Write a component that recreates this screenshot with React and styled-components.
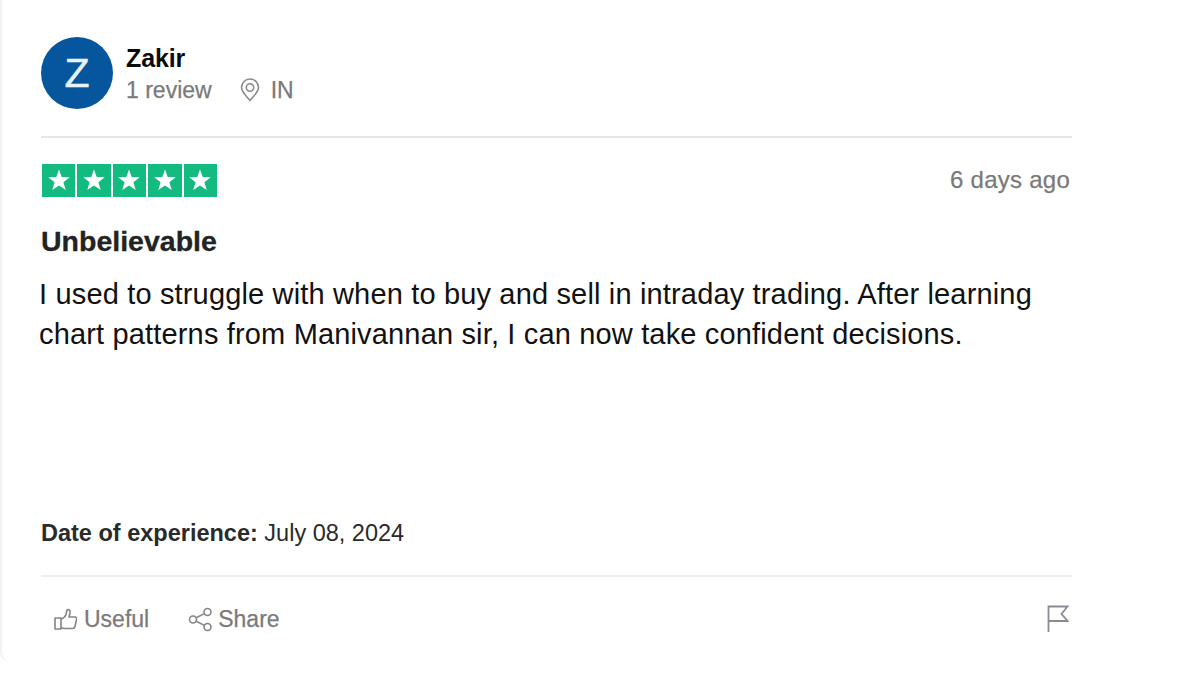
import React from "react";
import styled, { createGlobalStyle } from "styled-components";

const Global = createGlobalStyle`
  html, body { margin: 0; padding: 0; background: #fff; }
  body { font-family: "Liberation Sans", Arial, sans-serif; width: 1200px; height: 675px; overflow: hidden; }
`;
const Card = styled.div`
  width: 1072px; height: 662px; box-sizing: border-box;
  border-left: 2px solid #f2f2f2; border-bottom-left-radius: 10px;
  padding: 37px 0 0 39px;
  display: flex; flex-direction: column;
`;
const Header = styled.div`
  display: flex; gap: 13px; height: 72px; align-items: flex-start;
`;
const Avatar = styled.div`
  width: 72px; height: 72px; border-radius: 50%; background: #05569d; color: #e8f1f8;
  display: flex; align-items: center; justify-content: center;
  font-size: 41px; line-height: 1; -webkit-text-stroke: 0.5px #e8f1f8;
`;
const Who = styled.div`display: flex; flex-direction: column; padding-top: 7px;`;
const Name = styled.div`font-size: 25px; font-weight: 700; color: #0b0b0b; line-height: 28px; letter-spacing: -0.1px;`;
const Meta = styled.div`
  display: flex; align-items: center; font-size: 23px; line-height: 30px; color: #7a7a7a; margin-top: 3px;
  -webkit-text-stroke: 0.25px #7a7a7a;
`;
const Location = styled.span`display: flex; align-items: center; margin-left: 27px; gap: 10px;`;
const Rule = styled.div`height: 2px; background: ${p => p.$c};`;
const TopRule = styled(Rule)`margin-top: 27px;`;
const RatingRow = styled.div`
  display: flex; justify-content: space-between; align-items: center; margin-top: 25px; padding-left: 1px; height: 34px;
`;
const Stars = styled.div`display: flex; gap: 2px;`;
const Star = styled.div`
  width: 33.4px; height: 33px; background: #14bb80; display: flex; align-items: center; justify-content: center;
`;
const Ago = styled.div`
  font-size: 24px; color: #7a7a7a; line-height: 30px; margin: -1px 2px 0 0; letter-spacing: .25px;
  -webkit-text-stroke: 0.25px #7a7a7a;
`;
const Title = styled.div`
  font-size: 28.500px; font-weight: 700; color: #232323; line-height: 34px; margin-top: 27px;
  -webkit-text-stroke: 0.3px #232323;
`;
const Body = styled.div`font-size: 29px; line-height: 40px; color: #111; margin: 16px 0 0 -2px; letter-spacing: .16px;`;
const Experience = styled.div`font-size: 23.500px; line-height: 30px; color: #2a2a2a; margin-top: 164px; b { font-weight: 700; }`;
const BottomRule = styled(Rule)`margin-top: 27px;`;
const Actions = styled.div`
  display: flex; align-items: center; margin-top: 27px; padding-left: 13px; height: 30px;
`;
const Action = styled.div`
  display: flex; align-items: center; gap: ${p => p.$gap}px; font-size: 23px; color: #7a7a7c; margin-right: 39px;
  -webkit-text-stroke: 0.25px #7a7a7c;
`;
const FlagWrap = styled.div`margin: -2px 3px 0 auto; display: flex;`;

const StarIcon = () => (
  <svg width="24" height="24" viewBox="0 0 24 24">
    <path fill="#fff" d="M12 1.500l2.700 7.600 8.100.2-6.400 4.900 2.300 7.800-6.700-4.600-6.700 4.600 2.300-7.800L1.200 9.300l8.100-.2z" />
  </svg>
);
const Pin = () => (
  <svg width="22" height="24" viewBox="0 0 22 24" fill="none" stroke="#8a8a8a" strokeWidth="1.600">
    <path d="M11 22.500C7 17.500 2.500 14 2.500 9.500a8.500 8.500 0 0 1 17 0c0 4.500-4.500 8-8.500 13z" strokeLinejoin="round" />
    <circle cx="11" cy="9.500" r="3.700" />
  </svg>
);
const Thumb = () => (
  <svg width="23" height="23" viewBox="0 0 23 23" fill="none" stroke="#858587" strokeWidth="1.600" strokeLinejoin="round">
    <path d="M1 10h6v11H1z" />
    <path d="M7 11c2.500-.5 4-2 5-4.500l1-4.500c2-1 3.500.5 3 3l-1 4h6c1.500 0 2 1 1.500 2.500l-1.500 7c-.3 1.500-1 2-2.500 2H10c-1.500 0-2-.5-3-1" />
  </svg>
);
const ShareIcon = () => (
  <svg width="25" height="25" viewBox="0 0 25 25" fill="none" stroke="#858587" strokeWidth="1.600">
    <circle cx="19.500" cy="5" r="3.500" />
    <circle cx="5" cy="12.500" r="3.500" />
    <circle cx="19.500" cy="20" r="3.500" />
    <path d="M8.200 10.800l8.200-4.200M8.200 14.200l8.200 4.200" />
  </svg>
);
const Flag = () => (
  <svg width="22" height="27" viewBox="0 0 22 27" fill="none" stroke="#8b8b97" strokeWidth="1.800">
    <path d="M1.500 27V1.500h19l-6 7.500 6 7H1.500" strokeLinejoin="miter" />
  </svg>
);

export default function App() {
  return (
    <>
      <Global />
      <Card>
        <Header>
          <Avatar>Z</Avatar>
          <Who>
            <Name>Zakir</Name>
            <Meta>
              1 review
              <Location><Pin />IN</Location>
            </Meta>
          </Who>
        </Header>
        <TopRule $c="#e6e6e6" />
        <RatingRow>
          <Stars>
            {[0, 1, 2, 3, 4].map(i => <Star key={i}><StarIcon /></Star>)}
          </Stars>
          <Ago>6 days ago</Ago>
        </RatingRow>
        <Title>Unbelievable</Title>
        <Body>
          I used to struggle with when to buy and sell in intraday trading. After learning<br />
          chart patterns from Manivannan sir, I can now take confident decisions.
        </Body>
        <Experience><b>Date of experience:</b> July 08, 2024</Experience>
        <BottomRule $c="#eeeeee" />
        <Actions>
          <Action $gap={7}><Thumb />Useful</Action>
          <Action $gap={5}><ShareIcon />Share</Action>
          <FlagWrap><Flag /></FlagWrap>
        </Actions>
      </Card>
    </>
  );
}
